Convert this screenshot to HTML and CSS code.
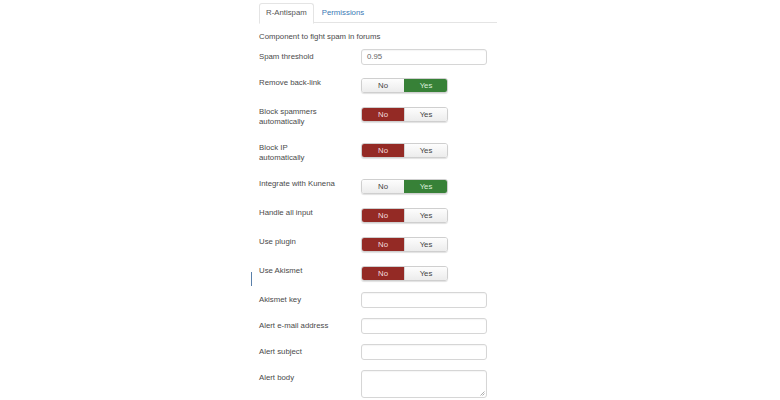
FILE: index.html
```html
<!DOCTYPE html>
<html>
<head>
<meta charset="utf-8">
<link rel="stylesheet" href="styles.css">
</head>
<body>
<div class="page">
  <span class="caret"></span>
  <div class="panel">
    <ul class="tabs">
      <li class="tab active">R-Antispam</li>
      <li class="tab"><a>Permissions</a></li>
    </ul>
    <p class="desc">Component to fight spam in forums</p>
    <div class="row r-input first">
      <label class="lbl">Spam threshold</label>
      <div class="ctl"><div class="input">0.95</div></div>
    </div>
    <div class="row r-toggle">
      <label class="lbl">Remove back-link</label>
      <div class="ctl"><div class="toggle"><span class="btn">No</span><span class="btn yes on">Yes</span></div></div>
    </div>
    <div class="row r-toggle tall">
      <label class="lbl">Block spammers<br>automatically</label>
      <div class="ctl"><div class="toggle"><span class="btn no on">No</span><span class="btn">Yes</span></div></div>
    </div>
    <div class="row r-toggle tall">
      <label class="lbl">Block IP<br>automatically</label>
      <div class="ctl"><div class="toggle"><span class="btn no on">No</span><span class="btn">Yes</span></div></div>
    </div>
    <div class="row r-toggle">
      <label class="lbl">Integrate with Kunena</label>
      <div class="ctl"><div class="toggle"><span class="btn">No</span><span class="btn yes on">Yes</span></div></div>
    </div>
    <div class="row r-toggle">
      <label class="lbl">Handle all input</label>
      <div class="ctl"><div class="toggle"><span class="btn no on">No</span><span class="btn">Yes</span></div></div>
    </div>
    <div class="row r-toggle">
      <label class="lbl">Use plugin</label>
      <div class="ctl"><div class="toggle"><span class="btn no on">No</span><span class="btn">Yes</span></div></div>
    </div>
    <div class="row r-toggle last-toggle">
      <label class="lbl">Use Akismet</label>
      <div class="ctl"><div class="toggle"><span class="btn no on">No</span><span class="btn">Yes</span></div></div>
    </div>
    <div class="row r-input">
      <label class="lbl">Akismet key</label>
      <div class="ctl"><div class="input"></div></div>
    </div>
    <div class="row r-input">
      <label class="lbl">Alert e-mail address</label>
      <div class="ctl"><div class="input"></div></div>
    </div>
    <div class="row r-input">
      <label class="lbl">Alert subject</label>
      <div class="ctl"><div class="input"></div></div>
    </div>
    <div class="row r-input">
      <label class="lbl">Alert body</label>
      <div class="ctl"><div class="input area"><svg class="grip" width="5" height="5" viewBox="0 0 5 5"><path d="M4.5 0.5 L0.5 4.5 M4.5 2.5 L2.5 4.5" stroke="#999" stroke-width="0.8" fill="none"/></svg></div></div>
    </div>
  </div>
</div>
</body>
</html>
```
FILE: styles.css
```css
html, body {
  margin: 0;
  padding: 0;
  background: #fff;
}
body {
  width: 780px;
  height: 400px;
  overflow: hidden;
  font-family: "Liberation Sans", Arial, sans-serif;
  font-size: 7.8px;
  color: #4a4a4a;
}
.page {
  position: relative;
  padding-left: 259px;
  padding-top: 3px;
}
.caret {
  position: absolute;
  left: 251px;
  top: 272px;
  width: 1px;
  height: 14px;
  background: #5a80aa;
}
.panel {
  width: 238px;
}
.tabs {
  list-style: none;
  margin: 0;
  padding: 0;
  display: flex;
  border-bottom: 1px solid #e4e4e4;
  height: 19px;
}
.tab {
  height: 19px;
  line-height: 18px;
  padding: 0 7px;
  margin-bottom: -1px;
  border: 1px solid transparent;
  border-radius: 3px 3px 0 0;
  color: #3071a9;
}
.tab.active {
  color: #555;
  border-color: #e4e4e4;
  border-bottom-color: #fff;
  background: #fff;
  padding: 0 6px;
}
.tab a {
  color: #3b78b4;
}
.desc {
  margin: 9px 0 7px;
  line-height: 10px;
}
.row {
  display: flex;
  align-items: flex-start;
}
.lbl {
  width: 102px;
  flex: none;
  line-height: 10px;
}
.r-input .lbl {
  padding-top: 3px;
}
.r-toggle .lbl {
  padding-top: 0;
}
.r-input {
  margin-bottom: 10px;
}
.r-input.first {
  margin-bottom: 13px;
}
.r-toggle {
  margin-bottom: 14px;
}
.r-toggle.tall {
  margin-bottom: 16px;
}
.r-toggle.last-toggle {
  margin-bottom: 11px;
}
.input {
  width: 126px;
  height: 16px;
  box-sizing: border-box;
  border: 1px solid #d6d6d6;
  border-radius: 3px;
  background: #fff;
  box-shadow: inset 0 1px 1px rgba(0,0,0,0.04);
  padding: 0 5px;
  line-height: 14px;
  color: #666;
}
.input.area {
  height: 28px;
  position: relative;
}
.grip {
  position: absolute;
  right: 1px;
  bottom: 1px;
}
.toggle {
  display: flex;
  width: 87px;
  height: 15px;
  box-sizing: border-box;
  border: 1px solid #cfcfcf;
  border-radius: 3px;
  overflow: hidden;
  box-shadow: 0 1px 1px rgba(0,0,0,0.12);
}
.btn {
  flex: 1;
  text-align: center;
  line-height: 13px;
  color: #444;
  background: linear-gradient(#fdfdfd, #ececec);
}
.btn + .btn {
  border-left: 1px solid #d4d4d4;
}
.btn.on.no {
  background: #942a25;
  color: #f3dede;
  border-color: #942a25;
}
.btn.on.yes {
  background: #378137;
  color: #dcefdc;
  border-color: #378137;
}
```
